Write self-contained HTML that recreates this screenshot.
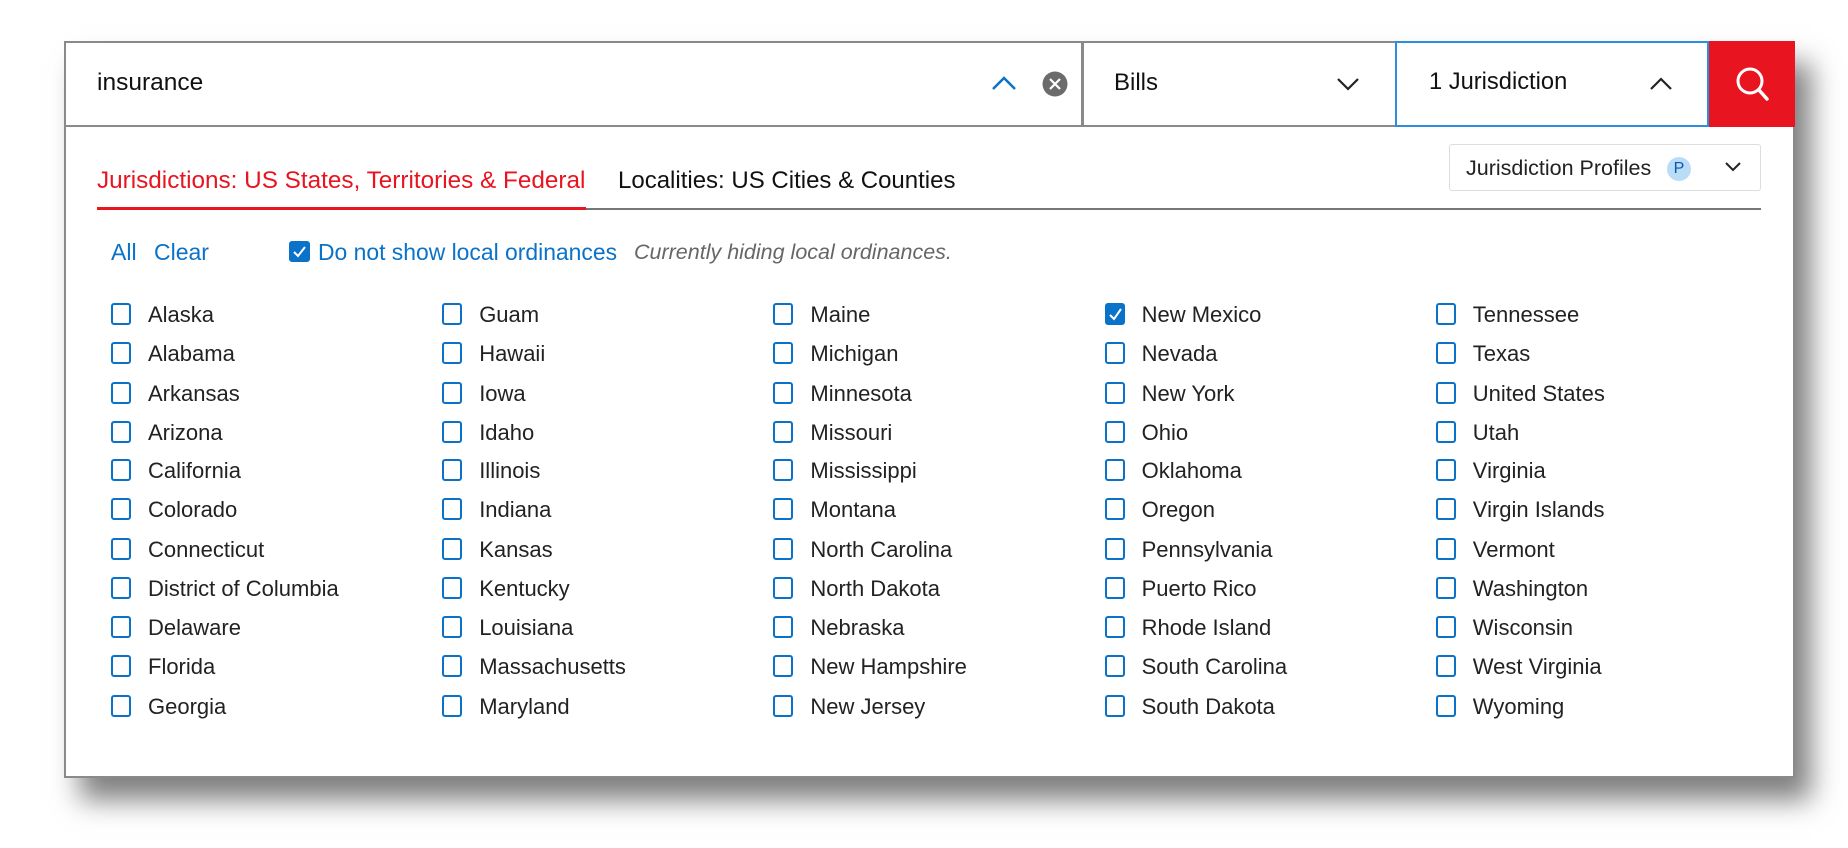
<!DOCTYPE html>
<html><head><meta charset="utf-8"><style>
*{box-sizing:border-box;margin:0;padding:0}
body{width:1848px;height:848px;background:#fff;position:relative;overflow:hidden;font-family:"Liberation Sans",Arial,sans-serif;color:#222}
.box{position:absolute;left:64px;top:41px;width:1731px;height:737px;background:#fff;border:2px solid #8a8a8a;box-shadow:16px 22px 26px rgba(0,0,0,.5)}
.a{position:absolute;white-space:nowrap}
.cb{position:absolute;width:20px;height:22px;border:2px solid #0a72c8;border-radius:3px;background:#fff}
.cb.on{background:#0a72c8}
.lbl{position:absolute;font-size:22px;color:#222;white-space:nowrap;line-height:24px}
</style></head><body>
<div class="box"></div>
<!-- top bar -->
<div class="a" style="left:64px;top:41px;width:1731px;height:86px;border:2px solid #8a8a8a;border-right:none;background:#fff"></div>
<div class="a" style="left:1081px;top:41px;width:3px;height:86px;background:#8a8a8a"></div>
<div class="a" style="left:1395px;top:41px;width:314px;height:86px;border:2px solid #2b8ee0;background:#fff"></div>
<div class="a" style="left:1709px;top:41px;width:86px;height:86px;background:#e8141f"></div>
<svg class="a" style="left:1730px;top:62px" width="44" height="44" viewBox="0 0 44 44"><circle cx="20" cy="19" r="12" fill="none" stroke="#fff" stroke-width="3"/><line x1="29" y1="28" x2="37" y2="37" stroke="#fff" stroke-width="3.5" stroke-linecap="round"/></svg>
<div class="a" style="left:97px;top:69px;font-size:24.5px;color:#111">insurance</div>
<svg class="a" style="left:991px;top:74px" width="26" height="18" viewBox="0 0 26 18"><polyline points="2,15 13,4 24,15" fill="none" stroke="#0a72c8" stroke-width="2.5"/></svg>
<svg class="a" style="left:1042px;top:71px" width="26" height="26" viewBox="0 0 26 26"><circle cx="13" cy="13" r="12.5" fill="#6b6b6b"/><path d="M8 8L18 18M18 8L8 18" stroke="#fff" stroke-width="2.2"/></svg>
<div class="a" style="left:1114px;top:69px;font-size:24px;color:#111">Bills</div>
<svg class="a" style="left:1336px;top:76px" width="24" height="16" viewBox="0 0 24 16"><polyline points="2,3 12,13 22,3" fill="none" stroke="#222" stroke-width="2.2"/></svg>
<div class="a" style="left:1429px;top:69px;font-size:23.7px;color:#111">1 Jurisdiction</div>
<svg class="a" style="left:1649px;top:76px" width="24" height="16" viewBox="0 0 24 16"><polyline points="2,13 12,3 22,13" fill="none" stroke="#222" stroke-width="2.2"/></svg>
<!-- tabs -->
<div class="a" style="left:97px;top:167px;font-size:24.3px;color:#e8141f">Jurisdictions: US States, Territories &amp; Federal</div>
<div class="a" style="left:618px;top:167px;font-size:24px;color:#111">Localities: US Cities &amp; Counties</div>
<div class="a" style="left:97px;top:208px;width:1664px;height:2px;background:#777"></div>
<div class="a" style="left:97px;top:207px;width:489px;height:3px;background:#e8141f"></div>
<div class="a" style="left:1449px;top:144px;width:312px;height:47px;border:1.5px solid #ddd;border-radius:3px"></div>
<div class="a" style="left:1466px;top:156px;font-size:21.5px;color:#222">Jurisdiction Profiles</div>
<div class="a" style="left:1667px;top:157px;width:24px;height:24px;border-radius:50%;background:#b9dcf7;color:#0a55b0;font-size:16px;text-align:center;line-height:24px">P</div>
<svg class="a" style="left:1724px;top:161px" width="18" height="12" viewBox="0 0 18 12"><polyline points="2,2 9,9 16,2" fill="none" stroke="#222" stroke-width="2"/></svg>
<!-- controls -->
<div class="a" style="left:111px;top:239px;font-size:23px;color:#0a72c8">All</div>
<div class="a" style="left:154px;top:239px;font-size:23px;color:#0a72c8">Clear</div>
<div class="cb on" style="left:289px;top:241px;width:21px;height:21px"></div>
<svg class="a" style="left:291px;top:243px" width="17" height="17" viewBox="0 0 17 17"><polyline points="3,9 7,13 14,4" fill="none" stroke="#fff" stroke-width="2"/></svg>
<div class="a" style="left:318px;top:239px;font-size:22.9px;color:#0a72c8">Do not show local ordinances</div>
<div class="a" style="left:634px;top:240px;font-size:21.5px;color:#666;font-style:italic">Currently hiding local ordinances.</div>
<div id="list"></div>
<script>
var cols=[["Alaska","Alabama","Arkansas","Arizona","California","Colorado","Connecticut","District of Columbia","Delaware","Florida","Georgia"],
["Guam","Hawaii","Iowa","Idaho","Illinois","Indiana","Kansas","Kentucky","Louisiana","Massachusetts","Maryland"],
["Maine","Michigan","Minnesota","Missouri","Mississippi","Montana","North Carolina","North Dakota","Nebraska","New Hampshire","New Jersey"],
["New Mexico","Nevada","New York","Ohio","Oklahoma","Oregon","Pennsylvania","Puerto Rico","Rhode Island","South Carolina","South Dakota"],
["Tennessee","Texas","United States","Utah","Virginia","Virgin Islands","Vermont","Washington","Wisconsin","West Virginia","Wyoming"]];
var ys=[315,354,394,433,471,510,550,589,628,667,707];
var h="";
for(var c=0;c<5;c++){var x=111+c*331.2;for(var r=0;r<11;r++){var y=ys[r];var on=(c==3&&r==0);
h+='<div class="cb'+(on?' on':'')+'" style="left:'+x+'px;top:'+(y-12)+'px"></div>';
if(on)h+='<svg class="a" style="left:'+(x+2)+'px;top:'+(y-10)+'px" width="17" height="18" viewBox="0 0 17 18"><polyline points="3,10 7,14 14,4" fill="none" stroke="#fff" stroke-width="2"/></svg>';
h+='<div class="lbl" style="left:'+(x+37)+'px;top:'+(y-12)+'px">'+cols[c][r]+'</div>';}}
document.getElementById("list").innerHTML=h;
</script>
</body></html>
